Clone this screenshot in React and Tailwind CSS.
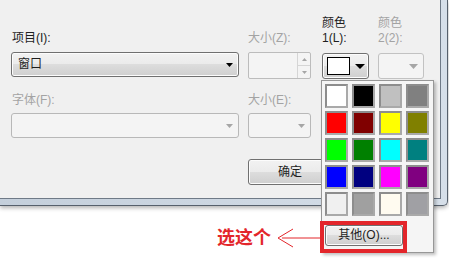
import React from 'react'

const font = "font-['Liberation_Sans','Noto_Sans_CJK_SC',sans-serif]"

const swatches = [
  '#ffffff', '#000000', '#c0c0c0', '#808080',
  '#ff0000', '#800000', '#ffff00', '#808000',
  '#00ff00', '#008000', '#00ffff', '#008080',
  '#0000ff', '#000080', '#ff00ff', '#800080',
  '#f0f0f0', '#a0a0a0', '#fffbf0', '#a0a0a4',
]

const Arrow = ({ w = 7, h = 4, color = '#000' }) => (
  <svg width={w} height={h} viewBox={`0 0 ${w} ${h}`}>
    <polygon points={`0,0 ${w},0 ${w / 2},${h}`} fill={color} />
  </svg>
)

// win7 style push button
const Button = ({ children, className = '' }) => (
  <div
    className={`flex items-center justify-center rounded-[3px] border border-[#707070] bg-[linear-gradient(#f2f2f2_0%,#ebebeb_49%,#dddddd_50%,#cfcfcf_100%)] shadow-[inset_0_0_0_1px_#fcfcfc] text-[12px] text-[#1e1e1e] ${className}`}
  >
    {children}
  </div>
)

const DisabledCombo = ({ className = '' }) => (
  <div className={`flex items-center justify-end rounded-[3px] border border-[#b8b8b8] bg-[#f4f4f4] pr-[5px] ${className}`}>
    <Arrow w={7} h={4} color="#a6a6a6" />
  </div>
)

const ColorPopup = () => (
  <div className="absolute left-[-1px] top-[27px] z-20 w-[113px] border border-[#979797] bg-[#f5f5f5] pt-[3px] pl-[3px] pb-[6px] shadow-[2px_2px_3px_rgba(0,0,0,0.25)]">
    <div className="grid grid-cols-[repeat(4,23px)] gap-x-[4px] gap-y-[3px]">
      {swatches.map((c, i) => (
        <div
          key={i}
          className="h-[24px] w-[23px] border-2 border-[#a9a9a9] border-t-[#8d8d8d] border-l-[#8d8d8d]"
          style={{ backgroundColor: c }}
        />
      ))}
    </div>
    <div className="relative mt-[9px] w-[78px]">
      <Button className="h-[21px] w-[78px]">其他(O)...</Button>
      <div className="absolute -left-[5px] -right-[4px] -top-[4px] -bottom-[7px] border-4 border-[#e3262b]" />
    </div>
  </div>
)

export default function App() {
  return (
    <div className={`relative h-[264px] w-[449px] overflow-hidden bg-white ${font}`}>
      {/* dialog window with frame */}
      <div className="h-[206px] w-[448px] rounded-br-[5px] border-b border-r border-[#56606c] bg-[linear-gradient(90deg,#c4cfdb,#d6dfe9)] pb-[6px] pr-[6px] shadow-[0_2px_4px_rgba(0,0,0,0.3)]">
        <div className="h-full border-b border-r border-[#6f7a87] bg-[#f0f0f0] pl-[11px] pt-[16px] text-[12px] leading-[15px] text-[#1e1e1e]">
          {/* labels */}
          <div className="flex items-end">
            <div className="w-[237px] pl-[1px]">项目(I):</div>
            <div className="w-[74px] text-[#a3a3a3]">大小(Z):</div>
            <div className="w-[56px]">颜色<br />1(L):</div>
            <div className="w-[46px] text-[#a3a3a3]">颜色<br />2(2):</div>
          </div>

          {/* controls */}
          <div className="mt-[6px] flex items-start">
            <Button className="h-[25px] w-[228px] !justify-between pl-[6px] pr-[5px]">
              <span>窗口</span>
              <Arrow w={7} h={4} />
            </Button>
            <div className="ml-[9px] flex h-[27px] w-[63px] rounded-[2px] border border-[#bcbcbc] bg-[#f4f4f4]">
              <div className="flex-1" />
              <div className="flex w-[13px] flex-col border-l border-[#d5d5d5]">
                <div className="flex flex-1 items-center justify-center border-b border-[#d5d5d5]">
                  <svg width="5" height="3"><polygon points="0,3 5,3 2.5,0" fill="#a6a6a6" /></svg>
                </div>
                <div className="flex flex-1 items-center justify-center">
                  <Arrow w={5} h={3} color="#a6a6a6" />
                </div>
              </div>
            </div>
            <div className="relative ml-[11px] mt-[1px]">
              <Button className="h-[26px] w-[47px] !justify-start gap-[5px] pl-[4px]">
                <div className="h-[18px] w-[23px] border border-black bg-white" />
                <Arrow w={10} h={5} />
              </Button>
              <ColorPopup />
            </div>
            <div className="ml-[9px] mt-[1px] flex h-[26px] w-[46px] items-center justify-end rounded-[3px] border border-[#c2c2c2] bg-[#f4f4f4] pr-[5px]">
              <Arrow w={9} h={5} color="#a6a6a6" />
            </div>
          </div>

          {/* font row */}
          <div className="mt-[14px] flex text-[#a3a3a3]">
            <div className="w-[237px] pl-[1px]">字体(F):</div>
            <div>大小(E):</div>
          </div>
          <div className="mt-[5px] flex">
            <DisabledCombo className="h-[25px] w-[228px]" />
            <DisabledCombo className="ml-[9px] h-[25px] w-[63px]" />
          </div>

          <div className="ml-[237px] mt-[21px]">
            <Button className="h-[26px] w-[84px]">确定</Button>
          </div>
        </div>
      </div>

      {/* annotation */}
      <div className="mt-[20px] flex h-[24px] items-center pl-[217px]">
        <span className="text-[18px] font-bold leading-[24px] text-[#e3262b]">选这个</span>
        <svg width="44" height="22" viewBox="0 0 44 22" className="ml-[6px]">
          <polyline points="16,2 1,11 16,20" fill="none" stroke="#e3262b" strokeWidth="1" />
          <line x1="5" y1="11" x2="44" y2="11" stroke="#e3262b" strokeWidth="1" />
        </svg>
      </div>
    </div>
  )
}
